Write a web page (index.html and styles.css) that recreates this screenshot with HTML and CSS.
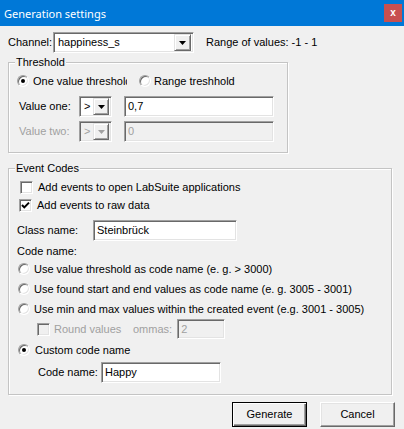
FILE: index.html
```html
<!DOCTYPE html>
<html lang="en">

  <head>
    <meta charset="UTF-8">
    <meta name="viewport" content="width=device-width, initial-scale=1.0">
    <title>Generation settings</title>

    <link rel="stylesheet" href="styles.css">
  </head>

  <body>

    <div class="window">

      <div class="titlebar">
        <span class="title">Generation settings</span>
        <span class="close">x</span>
      </div>

      <div class="content">

        <div class="channelRow">
          <span class="channelLabel">Channel:</span>
          <div class="combo channelCombo">
            <span class="comboText">happiness_s</span>
            <span class="comboBtn"><svg width="7" height="4" viewBox="0 0 7 4"><polygon points="0,0 7,0 3.5,4" fill="#000"/></svg></span>
          </div>
          <span class="range">Range of values: -1 - 1</span>
        </div>

        <fieldset class="group threshold">
          <legend>Threshold</legend>

          <div class="modeRow">
            <div class="radio oneValue">
              <span class="radioBox checked"></span>
              <span class="clipText">One value threshold</span>
            </div>
            <div class="radio rangeMode">
              <span class="radioBox"></span>
              <span>Range treshhold</span>
            </div>
          </div>

          <div class="valueRow">
            <span class="valueLabel">Value one:</span>
            <div class="combo opCombo">
              <span class="comboText">&gt;</span>
              <span class="comboBtn"><svg width="7" height="4" viewBox="0 0 7 4"><polygon points="0,0 7,0 3.5,4" fill="#000"/></svg></span>
            </div>
            <div class="textbox valueBox">0,7</div>
          </div>

          <div class="valueRow second disabled">
            <span class="valueLabel">Value two:</span>
            <div class="combo opCombo">
              <span class="comboText">&gt;</span>
              <span class="comboBtn"><svg width="7" height="4" viewBox="0 0 7 4"><polygon points="0,0 7,0 3.5,4" fill="#a0a0a0"/></svg></span>
            </div>
            <div class="textbox valueBox">0</div>
          </div>
        </fieldset>

        <fieldset class="group events">
          <legend>Event Codes</legend>

          <div class="check openApps">
            <span class="checkBox"></span>
            <span>Add events to open LabSuite applications</span>
          </div>
          <div class="check rawData">
            <span class="checkBox"><svg width="9" height="9" viewBox="0 0 9 9"><polyline points="1,4 3.3,6.4 8,1.6" fill="none" stroke="#000" stroke-width="2"/></svg></span>
            <span>Add events to raw data</span>
          </div>

          <div class="classRow">
            <span class="classLabel">Class name:</span>
            <div class="textbox classBox">Steinbrück</div>
          </div>

          <div class="codeTitle">Code name:</div>

          <div class="radio codeOption first">
            <span class="radioBox"></span>
            <span>Use value threshold as code name (e. g. &gt; 3000)</span>
          </div>
          <div class="radio codeOption">
            <span class="radioBox"></span>
            <span>Use found start and end values as code name (e. g. 3005 - 3001)</span>
          </div>
          <div class="radio codeOption">
            <span class="radioBox"></span>
            <span>Use min and max values within the created event (e.g. 3001 - 3005)</span>
          </div>

          <div class="roundRow disabled">
            <span class="checkBox"></span>
            <span class="roundLabel">Round values</span>
            <span class="commasLabel">ommas:</span>
            <div class="textbox commasBox">2</div>
          </div>

          <div class="radio codeOption custom">
            <span class="radioBox checked"></span>
            <span>Custom code name</span>
          </div>

          <div class="nameRow">
            <span class="nameLabel">Code name:</span>
            <div class="textbox nameBox">Happy</div>
          </div>
        </fieldset>

        <div class="buttons">
          <button class="btn default">Generate</button>
          <button class="btn">Cancel</button>
        </div>

      </div>
    </div>

  </body>

</html>
```

FILE: styles.css
```css
* {
  margin: 0;
  padding: 0;
  box-sizing: border-box;
}

body {
  width: 404px;
  height: 429px;
  overflow: hidden;
  background: #f0f0f0;
  font-family: "Liberation Sans", Arial, sans-serif;
  font-size: 11px;
  line-height: 13px;
  color: #000;
}

.window {
  height: 429px;
  display: flex;
  flex-direction: column;
}

.titlebar {
  height: 26px;
  background: #0078d7;
  color: #fff;
  display: flex;
  align-items: center;
  justify-content: space-between;
  padding: 0 2px 0 4px;

  & .title {
    font-family: "Noto Sans", sans-serif;
    font-size: 11px;
  }

  & .close {
    width: 18px;
    height: 18px;
    background: #c75050;
    display: flex;
    align-items: center;
    justify-content: center;
    font-weight: bold;
    font-size: 10px;
    padding-bottom: 2px;
  }
}

.content {
  padding-left: 8px;
  display: flex;
  flex-direction: column;
}

.disabled {
  color: #a0a0a0;
}

/* sunken 3d edge shared by inputs */
.combo,
.textbox,
.checkBox,
.radioBox {
  background: #fff;
  border: 1px solid;
  border-color: #a0a0a0 #fff #fff #a0a0a0;
  box-shadow: inset 1px 1px #696969, inset -1px -1px #e3e3e3;
}

.disabled .combo,
.disabled .textbox,
.disabled .checkBox {
  background: #f0f0f0;
}

.combo {
  height: 21px;
  display: flex;
  align-items: center;
  padding: 2px;

  & .comboText {
    flex: 1;
    padding-left: 2px;
  }

  & .comboBtn {
    width: 17px;
    height: 17px;
    background: #f0f0f0;
    border: 1px solid;
    border-color: #e3e3e3 #696969 #696969 #e3e3e3;
    box-shadow: inset 1px 1px #fff, inset -1px -1px #a0a0a0;
    display: flex;
    align-items: center;
    justify-content: center;
  }
}

.textbox {
  height: 21px;
  padding: 3px 3px 0;
  white-space: nowrap;
}

.channelRow {
  margin-top: 6px;
  height: 21px;
  display: flex;
  align-items: center;

  & .channelLabel {
    width: 45px;
  }

  & .channelCombo {
    width: 141px;
  }

  & .range {
    margin-left: 12px;
  }
}

.group {
  border: 1px solid #c4c4c4;
  box-shadow: inset 1px 1px #fff, 1px 1px #fff;
  display: flex;
  flex-direction: column;

  & legend {
    margin-left: 6px;
    padding: 0 1px;
    background: #f0f0f0;
    line-height: 13px;
  }
}

.radio,
.check {
  display: flex;
  align-items: center;
  gap: 4px;
  height: 16px;
  white-space: nowrap;
}

.radioBox {
  width: 12px;
  height: 12px;
  border-radius: 50%;
  flex-shrink: 0;
  display: flex;
  align-items: center;
  justify-content: center;

  &.checked::after {
    content: "";
    width: 4px;
    height: 4px;
    border-radius: 50%;
    background: #000;
  }
}

.checkBox {
  width: 13px;
  height: 13px;
  flex-shrink: 0;
  display: flex;
  align-items: center;
  justify-content: center;
}

.threshold {
  width: 280px;
  margin-top: 3px;
  padding-bottom: 10px;

  & .modeRow {
    margin-top: 4px;
    padding-left: 8px;
    display: flex;
  }

  & .oneValue {
    width: 110px;
    overflow: hidden;
  }

  & .clipText {
    overflow: hidden;
  }

  & .rangeMode {
    margin-left: 12px;
    gap: 3px;
  }

  & .valueRow {
    margin-top: 7px;
    padding-left: 10px;
    height: 21px;
    display: flex;
    align-items: center;
  }

  & .valueRow.second {
    margin-top: 4px;
  }

  & .valueLabel {
    width: 60px;
  }

  & .opCombo {
    width: 33px;
  }

  & .opCombo .comboBtn {
    width: 16px;
  }

  & .valueBox {
    width: 150px;
    margin-left: 12px;
  }
}

.events {
  width: 384px;
  margin-top: 9px;
  padding-bottom: 11px;

  & .check {
    gap: 5px;
  }

  & .openApps {
    margin-top: 4px;
    padding-left: 11px;
  }

  & .rawData {
    margin-top: 2px;
    padding-left: 10px;
  }

  & .classRow {
    margin-top: 7px;
    padding-left: 8px;
    height: 21px;
    display: flex;
    align-items: center;
  }

  & .classLabel {
    width: 76px;
  }

  & .classBox {
    width: 144px;
  }

  & .codeTitle {
    margin-top: 4px;
    padding-left: 8px;
    height: 14px;
  }

  & .codeOption {
    margin-top: 4px;
    padding-left: 9px;
  }

  & .codeOption.first {
    margin-top: 2px;
  }

  & .roundRow {
    margin-top: 2px;
    padding-left: 28px;
    height: 20px;
    display: flex;
    align-items: center;
  }

  & .roundLabel {
    margin-left: 4px;
    width: 79px;
  }

  & .commasBox {
    width: 48px;
    height: 20px;
    margin-left: 5px;
  }

  & .codeOption.custom {
    margin-top: 3px;
    gap: 5px;
  }

  & .nameRow {
    margin-top: 4px;
    padding-left: 29px;
    height: 21px;
    display: flex;
    align-items: center;
  }

  & .nameLabel {
    width: 63px;
  }

  & .nameBox {
    width: 120px;
  }
}

.buttons {
  margin-top: 7px;
  padding-right: 9px;
  display: flex;
  justify-content: flex-end;
  gap: 13px;

  & .btn {
    width: 75px;
    height: 25px;
    font: inherit;
    color: #000;
    background: #f0f0f0;
    border: 1px solid;
    border-color: #fff #696969 #696969 #fff;
    box-shadow: inset -1px -1px #a0a0a0, inset 1px 1px #e3e3e3;
  }

  & .btn.default {
    border: 1px solid #000;
    box-shadow: inset 1px 1px #fff, inset -1px -1px #696969, inset -2px -2px #a0a0a0;
  }
}
```
